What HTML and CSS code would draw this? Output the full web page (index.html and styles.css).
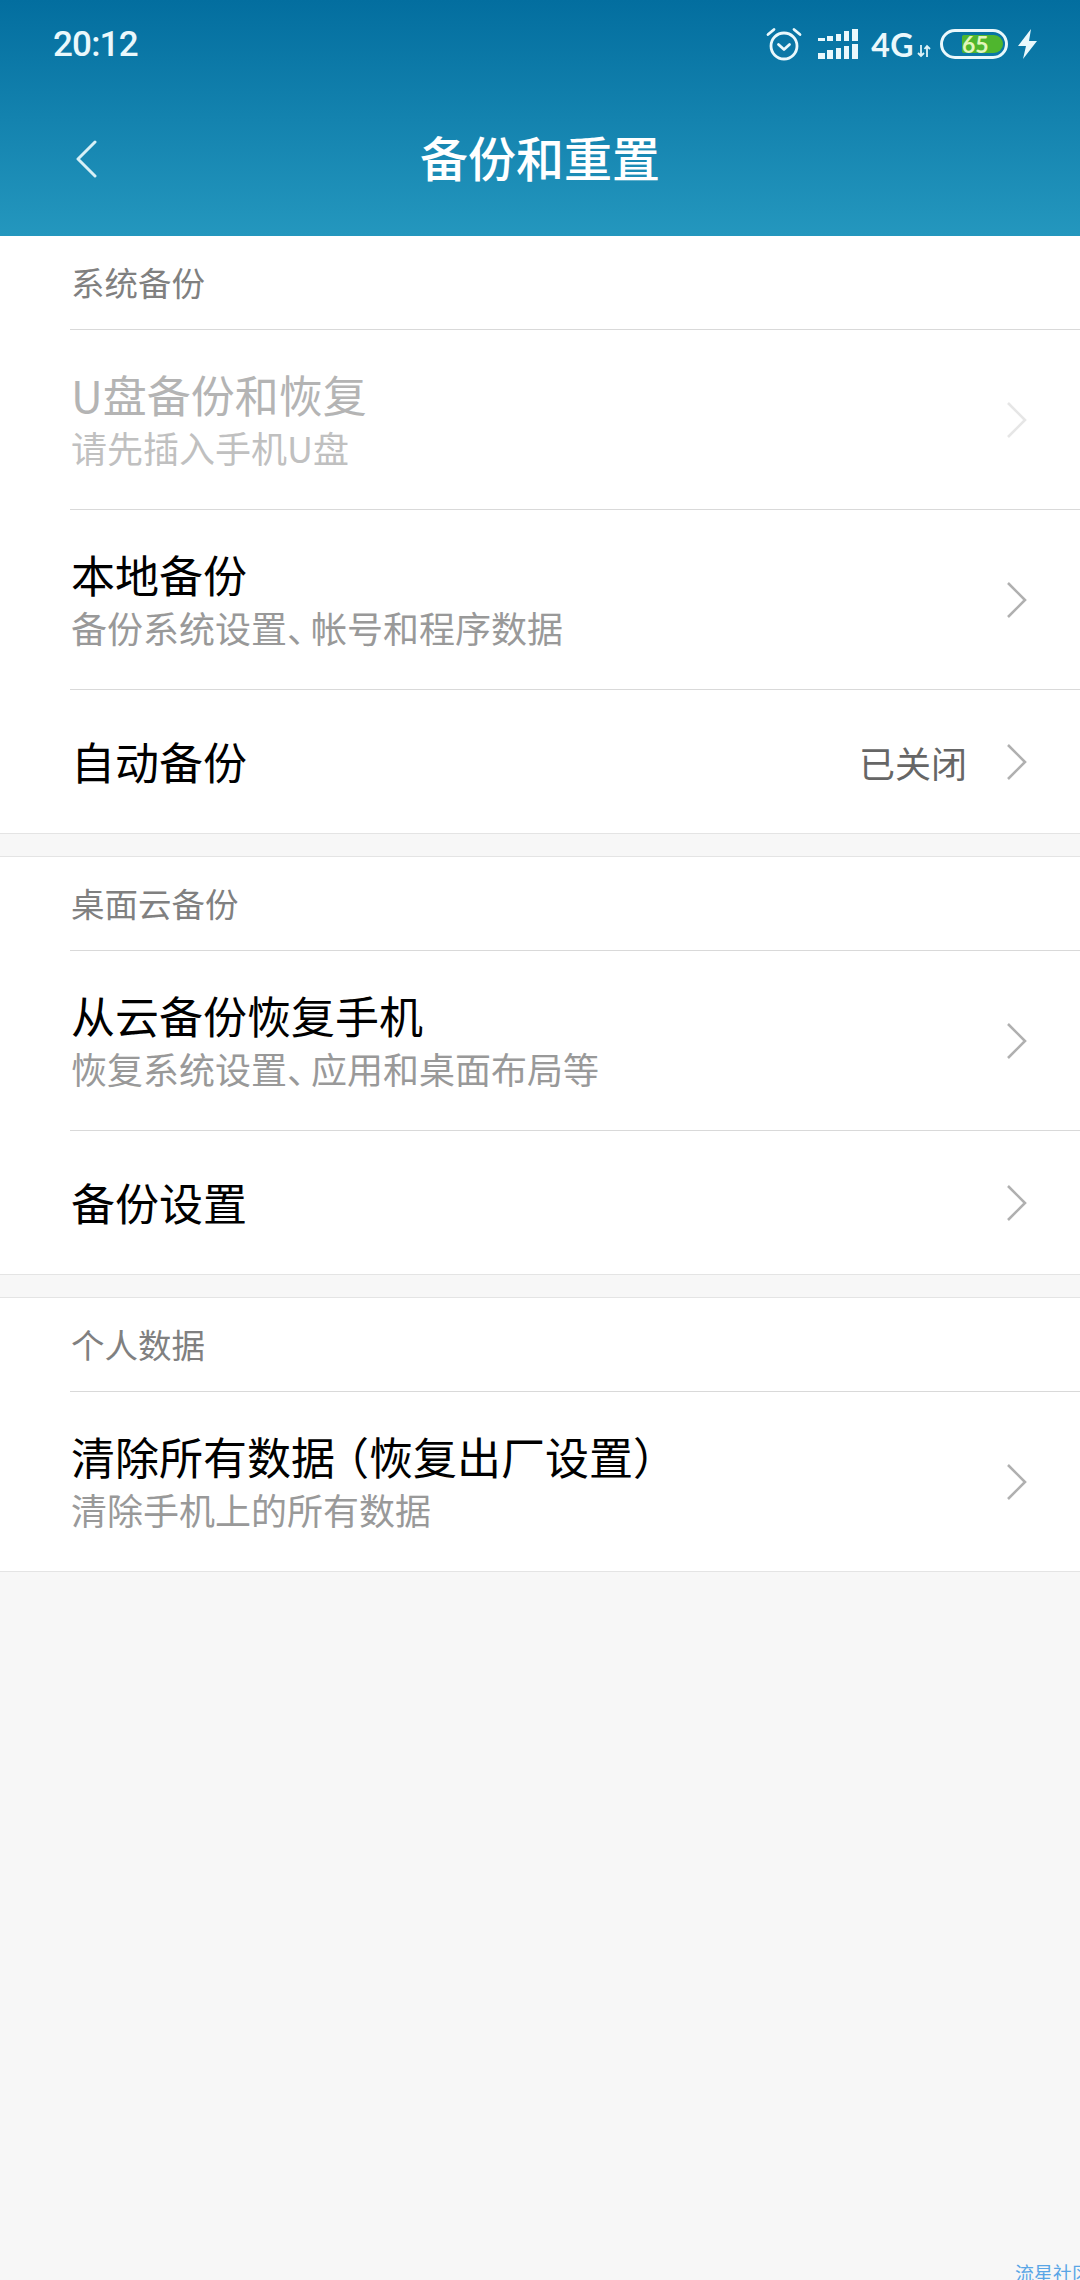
FILE: index.html
```html
<!DOCTYPE html>
<html lang="zh-CN">
<head>
<meta charset="utf-8">
<title>备份和重置</title>
<link rel="stylesheet" href="styles.css">
</head>
<body>
<header class="appbar">
  <div class="status">
    <span class="clock">20:12</span>
    <div class="status-icons">
      <svg class="ic-alarm" width="36" height="34" viewBox="0 0 36 34" fill="none" stroke="#eaf8fc" stroke-linecap="round">
        <circle cx="18" cy="19" r="13" stroke-width="2.800"/>
        <path d="M12.500 17.500l5.500 5 5.500-5" stroke-width="2.800" stroke-linejoin="round"/>
        <path d="M2 7.500 8 2.500M34 7.500 28 2.500" stroke-width="2.800"/>
      </svg>
      <svg class="ic-signal" width="40" height="32" viewBox="0 0 40 32" fill="#eaf8fc">
        <rect x="0" y="10" width="7" height="3"/><rect x="0" y="25" width="7" height="6"/>
        <rect x="9" y="8" width="6" height="5"/><rect x="9" y="22" width="6" height="9"/>
        <rect x="18" y="6" width="5" height="7"/><rect x="18" y="20" width="5" height="11"/>
        <rect x="26" y="3" width="5" height="10"/><rect x="26" y="18" width="5" height="13"/>
        <rect x="34" y="1" width="6" height="12"/><rect x="34" y="16" width="6" height="15"/>
      </svg>
      <span class="net">4G</span>
      <svg class="ic-updown" width="14" height="14" viewBox="0 0 14 14" fill="none" stroke="#dff3f8" stroke-width="1.800">
        <path d="M4 1v11M1 9l3 3 3-3M10 13V2M7.500 5 10 2l3 3"/>
      </svg>
      <div class="battery"><div class="battery-fill"></div><span class="battery-num">65</span></div>
      <svg class="ic-bolt" width="20" height="30" viewBox="0 0 20 30" fill="#eaf8fc">
        <path d="M13 0 0 17h8L5 30 19 12h-8z"/>
      </svg>
    </div>
  </div>
  <div class="navbar">
    <svg class="ic-back" width="24" height="38" viewBox="0 0 24 38" fill="none" stroke="#d8f0f7" stroke-width="3" stroke-linecap="round" stroke-linejoin="round">
      <path d="M21 2 4 19l17 17"/>
    </svg>
    <h1 class="page-title">备份和重置</h1>
  </div>
</header>

<main>
  <section class="group">
    <h2 class="group-title">系统备份</h2>
    <a class="row row-tall row-off">
      <div class="row-text"><span class="row-name">U盘备份和恢复</span><span class="row-sub">请先插入手机U盘</span></div>
      <svg class="chev" width="20" height="36" viewBox="0 0 20 36"><path d="M1 1 18 18 1 35"/></svg>
    </a>
    <a class="row row-tall">
      <div class="row-text"><span class="row-name">本地备份</span><span class="row-sub">备份系统设置<span class="comma">、</span>帐号和程序数据</span></div>
      <svg class="chev" width="20" height="36" viewBox="0 0 20 36"><path d="M1 1 18 18 1 35"/></svg>
    </a>
    <a class="row">
      <div class="row-text"><span class="row-name">自动备份</span></div>
      <span class="row-value">已关闭</span>
      <svg class="chev" width="20" height="36" viewBox="0 0 20 36"><path d="M1 1 18 18 1 35"/></svg>
    </a>
  </section>

  <section class="group">
    <h2 class="group-title">桌面云备份</h2>
    <a class="row row-tall">
      <div class="row-text"><span class="row-name">从云备份恢复手机</span><span class="row-sub">恢复系统设置<span class="comma">、</span>应用和桌面布局等</span></div>
      <svg class="chev" width="20" height="36" viewBox="0 0 20 36"><path d="M1 1 18 18 1 35"/></svg>
    </a>
    <a class="row">
      <div class="row-text"><span class="row-name">备份设置</span></div>
      <svg class="chev" width="20" height="36" viewBox="0 0 20 36"><path d="M1 1 18 18 1 35"/></svg>
    </a>
  </section>

  <section class="group">
    <h2 class="group-title">个人数据</h2>
    <a class="row row-tall">
      <div class="row-text"><span class="row-name">清除所有数据<span class="paren">（</span>恢复出厂设置）</span><span class="row-sub">清除手机上的所有数据</span></div>
      <svg class="chev" width="20" height="36" viewBox="0 0 20 36"><path d="M1 1 18 18 1 35"/></svg>
    </a>
  </section>
</main>

<span class="watermark">流星社区</span>
</body>
</html>
```

FILE: styles.css
```css
* { box-sizing: border-box; }

html, body {
  margin: 0;
  height: 2280px;
  overflow: hidden;
}

body {
  position: relative;
  background: #f7f7f7;
  font-family: "Noto Sans CJK SC", "Noto Sans", sans-serif;
}

/* App bar with status line */
.appbar {
  height: 236px;
  background: linear-gradient(180deg, #036e9f 0%, #2497be 100%);
  color: #fff;
}

.status {
  height: 88px;
  padding: 0 42px 0 53px;
  display: flex;
  align-items: center;
  justify-content: space-between;
}

.clock {
  font-family: "Roboto", sans-serif;
  font-weight: 500;
  font-size: 35px;
  letter-spacing: -0.8px;
  color: #eaf8fc;
}

.status-icons {
  display: flex;
  align-items: center;
}

.ic-alarm { margin-right: 16px; }
.ic-signal { margin-right: 13px; }

.net {
  font-family: "Lato", sans-serif;
  font-weight: 700;
  font-size: 32px;
  letter-spacing: 0.5px;
  color: #eaf8fc;
}

.ic-updown { margin: 13px 9px 0 3px; }

.battery {
  position: relative;
  width: 68px;
  height: 30px;
  border: 3px solid #eaf8fc;
  border-radius: 15px;
}

.battery-fill {
  position: absolute;
  left: 19px;
  top: 3px;
  bottom: 3px;
  width: 41px;
  background: #4fb62e;
  border-radius: 2px 10px 10px 2px;
}

.battery-num {
  position: absolute;
  left: 19px;
  top: 0;
  font-family: "Lato", sans-serif;
  font-weight: 700;
  font-size: 23px;
  line-height: 24px;
  color: #e2f6bd;
}

.ic-bolt { margin-left: 10px; }

.navbar {
  position: relative;
  height: 148px;
  display: flex;
  align-items: center;
  justify-content: center;
  padding-bottom: 12px;
}

.ic-back {
  position: absolute;
  left: 74px;
  top: 52px;
}

.page-title {
  margin: 0;
  font-size: 48px;
  font-weight: 500;
  line-height: 60px;
  color: #fff;
}

/* Settings groups */
.group {
  background: #fff;
  border-bottom: 1px solid #e4e4e4;
  margin-bottom: 22px;
  padding-left: 70px;
}

.group + .group { border-top: 1px solid #e4e4e4; }

.group-title {
  margin: 0;
  height: 93px;
  padding: 0 0 2px 1px;
  display: flex;
  align-items: center;
  font-size: 33.5px;
  font-weight: 400;
  color: #808080;
}

.row {
  height: 144px;
  display: flex;
  align-items: center;
  padding-right: 53px;
  border-top: 1px solid #d9d9d9;
}

.row-tall { height: 180px; }

.row-text {
  flex: 1;
  display: flex;
  flex-direction: column;
  padding-left: 1px;
}

.row-name {
  font-size: 44px;
  line-height: 56px;
  margin-top: -2px;
  color: #000;
}

.row-sub {
  font-size: 36px;
  line-height: 50px;
  color: #999;
}

/* Full-width punctuation is set at half width, plus a little air */
.comma {
  font-feature-settings: "halt";
  padding-right: 6px;
}

.paren {
  font-feature-settings: "halt";
  padding-left: 12px;
}

.row-value {
  font-size: 36px;
  color: #666;
  margin-right: 40px;
}

.chev {
  fill: none;
  stroke: #b0b0b0;
  stroke-width: 2.6;
}

.row-off .row-name { color: #b4b4b4; }
.row-off .row-sub { color: #c0c0c0; }
.row-off .chev { stroke: #e6e6e6; }

/* Forum mark in the bottom corner */
.watermark {
  position: absolute;
  left: 1015px;
  top: 2261px;
  font-size: 19px;
  line-height: 24px;
  white-space: nowrap;
  color: #5aa6e6;
}
```
